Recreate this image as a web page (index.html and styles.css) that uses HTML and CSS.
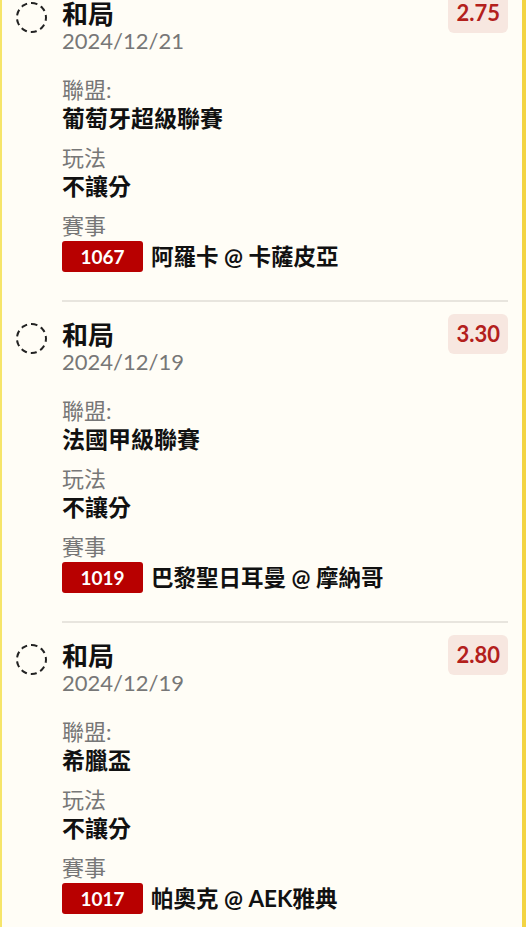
FILE: index.html
```html
<!DOCTYPE html>
<html lang="zh-Hant">
<head>
  <meta charset="UTF-8">
  <meta name="viewport" content="width=device-width, initial-scale=1.0">
  <title>投注紀錄</title>
  <link rel="stylesheet" href="styles.css">
</head>
<body>
  <div class="panel">

    <div class="bet">
      <div class="check"></div>
      <div class="main">
        <div class="head">
          <div class="info">
            <div class="title">和局</div>
            <div class="date">2024/12/21</div>
          </div>
          <div class="odds">2.75</div>
        </div>
        <div class="fields">
          <div class="field">
            <div class="label">聯盟:</div>
            <div class="value">葡萄牙超級聯賽</div>
          </div>
          <div class="field">
            <div class="label">玩法</div>
            <div class="value">不讓分</div>
          </div>
          <div class="field">
            <div class="label">賽事</div>
            <div class="match">
              <span class="badge">1067</span>
              <span class="teams">阿羅卡 @ 卡薩皮亞</span>
            </div>
          </div>
        </div>
      </div>
    </div>

    <div class="bet">
      <div class="check"></div>
      <div class="main">
        <div class="head">
          <div class="info">
            <div class="title">和局</div>
            <div class="date">2024/12/19</div>
          </div>
          <div class="odds">3.30</div>
        </div>
        <div class="fields">
          <div class="field">
            <div class="label">聯盟:</div>
            <div class="value">法國甲級聯賽</div>
          </div>
          <div class="field">
            <div class="label">玩法</div>
            <div class="value">不讓分</div>
          </div>
          <div class="field">
            <div class="label">賽事</div>
            <div class="match">
              <span class="badge">1019</span>
              <span class="teams">巴黎聖日耳曼 @ 摩納哥</span>
            </div>
          </div>
        </div>
      </div>
    </div>

    <div class="bet">
      <div class="check"></div>
      <div class="main">
        <div class="head">
          <div class="info">
            <div class="title">和局</div>
            <div class="date">2024/12/19</div>
          </div>
          <div class="odds">2.80</div>
        </div>
        <div class="fields">
          <div class="field">
            <div class="label">聯盟:</div>
            <div class="value">希臘盃</div>
          </div>
          <div class="field">
            <div class="label">玩法</div>
            <div class="value">不讓分</div>
          </div>
          <div class="field">
            <div class="label">賽事</div>
            <div class="match">
              <span class="badge">1017</span>
              <span class="teams">帕奧克 @ AEK雅典</span>
            </div>
          </div>
        </div>
      </div>
    </div>

  </div>
</body>
</html>
```

FILE: styles.css
```css
/* General styles */
body {
  margin: 0;
  background-color: #fff;
  font-family: 'Lato', 'Noto Sans CJK TC', sans-serif;
  color: #111;
  overflow: hidden;
}

.panel {
  width: 520px;
  margin-top: -19px;
  background-color: #fffdf6;
  border-left: 2px solid #f6e56a;
  border-right: 4px solid #f3d443;
}

/* One bet row */
.bet {
  display: flex;
  padding: 0 14px;
}

.check {
  flex-shrink: 0;
  width: 27px;
  height: 27px;
  margin-top: 21px;
  border: 2px dashed #222;
  border-radius: 50%;
}

.main {
  flex: 1;
  margin-left: 15px;
  padding: 12px 0 28px;
  border-bottom: 2px solid #e8e5de;
}

.head {
  display: flex;
  justify-content: space-between;
  align-items: flex-start;
}

.info {
  margin-top: 6px;
}

.title {
  font-size: 26px;
  line-height: 30px;
  font-weight: 700;
}

.date {
  font-size: 22px;
  line-height: 24px;
  color: #777;
}

.odds {
  height: 40px;
  line-height: 40px;
  padding: 0 8px;
  border-radius: 6px;
  background-color: #f7e7e0;
  color: #b3201c;
  font-size: 22px;
  font-weight: 700;
}

.fields {
  margin-top: 23px;
}

.field + .field {
  margin-top: 12px;
}

.label {
  font-size: 22px;
  line-height: 28px;
  color: #777;
}

.value {
  font-size: 23px;
  line-height: 28px;
  font-weight: 700;
}

.match {
  display: flex;
  align-items: center;
  height: 31px;
  margin-top: 1px;
}

.badge {
  width: 81px;
  height: 31px;
  line-height: 31px;
  border-radius: 3px;
  background-color: #b80000;
  color: #fff;
  text-align: center;
  font-size: 19px;
  font-weight: 700;
}

.teams {
  margin-left: 8px;
  font-size: 22.5px;
  line-height: 31px;
  font-weight: 700;
}
```
